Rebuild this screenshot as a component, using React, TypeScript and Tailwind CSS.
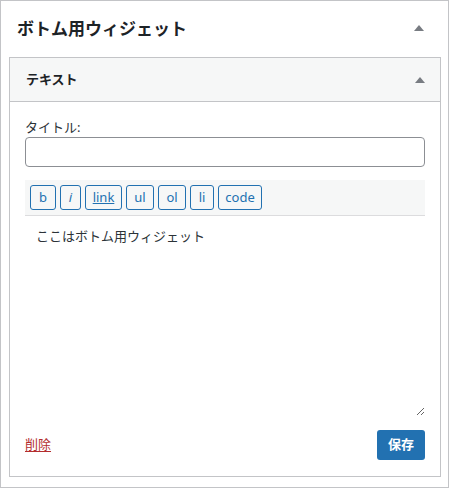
import React from 'react';

const font = { fontFamily: '"Noto Sans", "Noto Sans CJK JP", sans-serif' };

function Arrow() {
  return (
    <svg width="10" height="6" viewBox="0 0 10 6" className="block">
      <polygon points="5,0 10,6 0,6" fill="#787c82" />
    </svg>
  );
}

const tags = [
  { label: 'b', cls: 'w-[26px]' },
  { label: 'i', cls: 'w-[21px] italic' },
  { label: 'link', cls: 'w-[37px] underline' },
  { label: 'ul', cls: 'w-[28px]' },
  { label: 'ol', cls: 'w-[28px]' },
  { label: 'li', cls: 'w-[24px]' },
  { label: 'code', cls: 'w-[44px]' },
];

export default function App() {
  return (
    <div className="w-[449px] h-[488px] bg-white border border-[#c3c4c7] flex flex-col" style={font}>
      <div className="h-[56px] flex items-center justify-between pl-[16px] pr-[24px] pb-[2px]">
        <h2 className="text-[17px] font-semibold text-[#1d2327] leading-none">ボトム用ウィジェット</h2>
        <Arrow />
      </div>

      <div className="ml-[8px] mr-[7px] border border-[#c3c4c7] flex flex-col">
        <div className="h-[44px] bg-[#f6f7f7] border-b border-[#c3c4c7] flex items-center justify-between pl-[16px] pr-[15px]">
          <h3 className="text-[13px] font-semibold text-[#1d2327] leading-none">テキスト</h3>
          <Arrow />
        </div>

        <div className="px-[15px] pt-[15px] pb-[16px] flex flex-col">
          <label className="h-[20px] text-[13px] leading-[20px] text-[#2c3338]">タイトル:</label>
          <input
            type="text"
            className="h-[30px] w-full rounded-[4px] border border-[#8c8f94] bg-white px-2 text-[13px] outline-none"
          />

          <div className="mt-[13px] h-[36px] bg-[#f6f7f7] border-b border-[#dcdcde] flex items-center gap-[4px] px-[5px] pb-[1px]">
            {tags.map((t) => (
              <button
                key={t.label}
                className={`${t.cls} h-[25px] rounded-[3px] border border-[#2271b1] bg-[#f6f7f7] text-[13px] leading-none text-[#2271b1] flex items-center justify-center`}
              >
                {t.label}
              </button>
            ))}
          </div>

          <textarea
            defaultValue="ここはボトム用ウィジェット"
            className="h-[200px] w-full resize-y border-0 bg-white px-[11px] py-[10px] text-[13px] leading-[20px] text-[#2c3338] outline-none"
          />

          <div className="mt-[14px] h-[30px] flex items-center justify-between">
            <a href="#" className="text-[13px] text-[#b32d2e] underline underline-offset-2">削除</a>
            <button className="h-[30px] w-[48px] rounded-[3px] bg-[#2271b1] text-[13px] font-semibold text-white">保存</button>
          </div>
        </div>
      </div>
    </div>
  );
}
